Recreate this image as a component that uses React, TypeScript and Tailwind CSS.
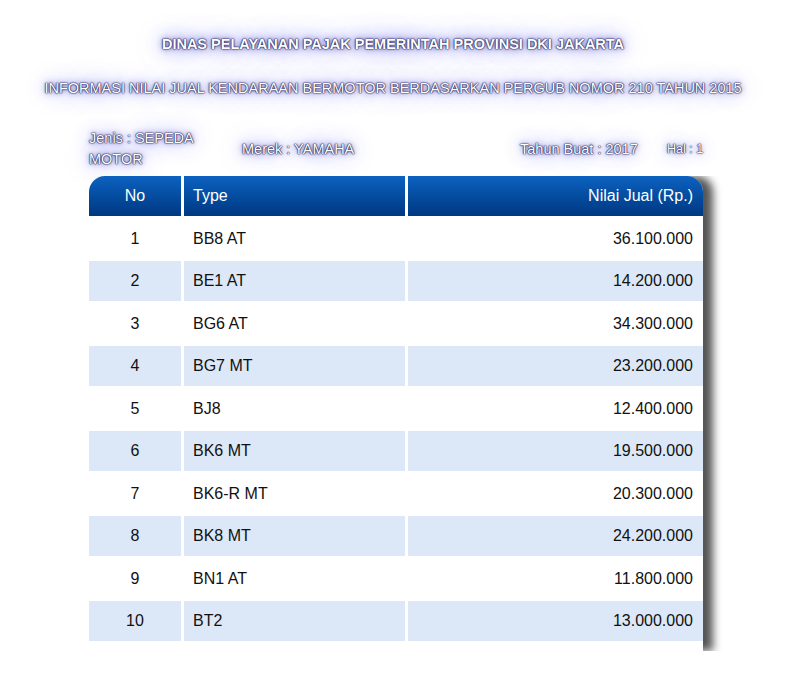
const rows: [number, string, string][] = [
  [1, "BB8 AT", "36.100.000"],
  [2, "BE1 AT", "14.200.000"],
  [3, "BG6 AT", "34.300.000"],
  [4, "BG7 MT", "23.200.000"],
  [5, "BJ8", "12.400.000"],
  [6, "BK6 MT", "19.500.000"],
  [7, "BK6-R MT", "20.300.000"],
  [8, "BK8 MT", "24.200.000"],
  [9, "BN1 AT", "11.800.000"],
  [10, "BT2", "13.000.000"],
];

const glow =
  "text-white [text-shadow:0_0_1px_#1b1b55,0_0_1px_#1b1b55,0_0_2px_#1b1b55,0_0_6px_#5656b0,0_0_18px_#9898ee,0_0_34px_#a8a8f6,0_0_50px_#bcbcfa]";

export default function App() {
  return (
    <div className="w-[786px] h-[690px] bg-white font-['Liberation_Sans',Arial,sans-serif] overflow-hidden">
      <h1 className={`pt-[35px] text-center text-[14.5px] leading-[18px] font-bold ${glow}`}>
        DINAS PELAYANAN PAJAK PEMERINTAH PROVINSI DKI JAKARTA
      </h1>
      <h2 className={`mt-[26px] text-center text-[14.5px] leading-[18px] font-normal ${glow}`}>
        INFORMASI NILAI JUAL KENDARAAN BERMOTOR BERDASARKAN PERGUB NOMOR 210 TAHUN 2015
      </h2>

      <div className={`ml-[89px] mt-[31px] w-[614px] h-[42px] grid grid-cols-[153px_278px_147px_1fr] items-center text-[14.5px] leading-[21px] ${glow}`}>
        <div className="w-[115px]">Jenis : SEPEDA MOTOR</div>
        <div className="whitespace-nowrap">Merek : YAMAHA</div>
        <div className="whitespace-nowrap">Tahun Buat : 2017</div>
        <div className="whitespace-nowrap text-[12.5px]">Hal : 1</div>
      </div>

      <div className="ml-[89px] mt-[6px] w-[640px] pr-[26px] overflow-hidden">
        <div className="w-[614px] pb-[10px] bg-white rounded-t-[16px] [box-shadow:10px_0_8px_#555]">
          <div className="grid grid-cols-[92px_221px_1fr] gap-x-[3px] gap-y-[2.5px] text-[16px] leading-[40px]">
            <div className="h-[40px] rounded-tl-[16px] bg-linear-to-b from-[#0d62c0] to-[#003882] text-white text-center">No</div>
            <div className="h-[40px] bg-linear-to-b from-[#0d62c0] to-[#003882] text-white pl-[9px]">Type</div>
            <div className="h-[40px] rounded-tr-[16px] bg-linear-to-b from-[#0d62c0] to-[#003882] text-white text-right pr-[10px]">Nilai Jual (Rp.)</div>
            {rows.map(([no, type, price]) => {
              const bg = no % 2 === 0 ? "bg-[#dce8f7]" : "bg-white";
              return [
                <div key={`n${no}`} className={`h-[40px] ${bg} text-[#111] text-center`}>{no}</div>,
                <div key={`t${no}`} className={`h-[40px] ${bg} text-[#111] pl-[9px]`}>{type}</div>,
                <div key={`p${no}`} className={`h-[40px] ${bg} text-[#111] text-right pr-[10px]`}>{price}</div>,
              ];
            })}
          </div>
        </div>
      </div>
    </div>
  );
}
